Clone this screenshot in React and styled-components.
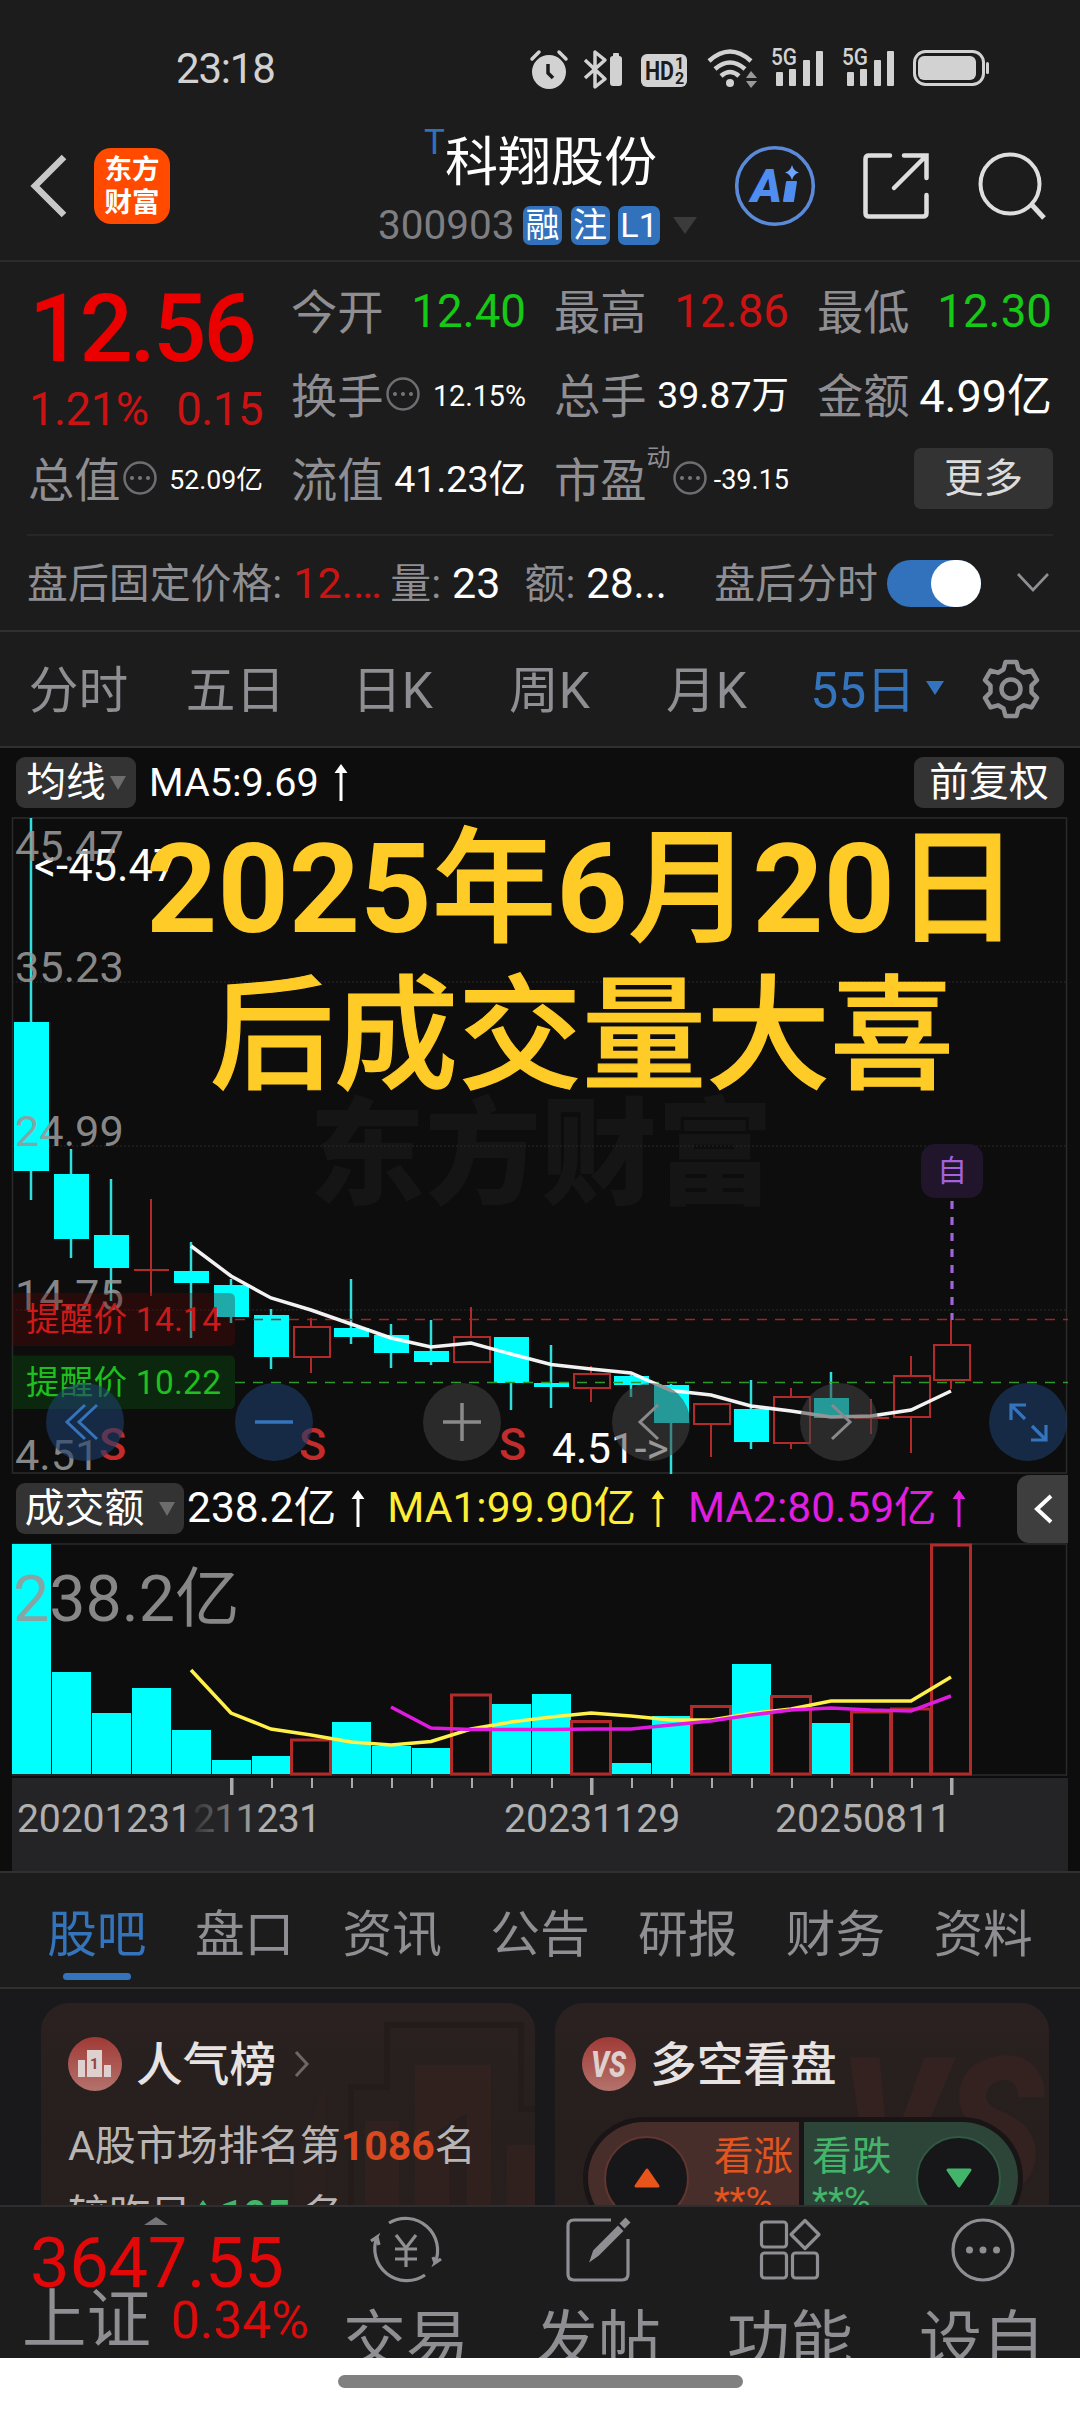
import React, { useState } from 'react'
import styled, { createGlobalStyle } from 'styled-components';

const GlobalStyle = createGlobalStyle`
  body {
    margin: 0;
    background: #1c1c1c;
    font-family: Roboto, "Noto Sans CJK SC", sans-serif;
  }
  * {
    box-sizing: border-box;
  }
  svg {
    overflow: visible;
  }
`;

const UP = '#cc1313';
const DOWN = '#17c917';
const CYAN = '#00ffff';
const RED_LINE = '#b22b2b';
const BLUE = '#3474bd';
const GRAY = '#8e8e93';

const Page = styled.div`
  width: 1080px;
  height: 2412px;
  display: flex;
  flex-direction: column;
  overflow: hidden;
  background: #1c1c1c;
  color: #fff;
  line-height: 1;
  white-space: nowrap;
`;

/* ---------- status bar ---------- */

const StatusBar = styled.div`
  height: 130px;
  display: flex;
  align-items: center;
  justify-content: space-between;
  padding: 8px 91px 0 176px;
  flex-shrink: 0;
`;

const Clock = styled.div`
  font-size: 42px;
  letter-spacing: -1.2px;
  color: #d2d2d2;
`;

/* ---------- header ---------- */

const Header = styled.header`
  height: 132px;
  display: flex;
  flex-shrink: 0;
  border-bottom: 2px solid #2c2c2e;
`;

const HeaderLeft = styled.div`
  width: 380px;
  height: 111px;
  display: flex;
  align-items: center;
  gap: 27px;
  padding-left: 30px;
`;

const Logo = styled.div`
  width: 76px;
  height: 76px;
  border-radius: 17px;
  background: #ff4a00;
  display: flex;
  flex-direction: column;
  align-items: center;
  justify-content: center;
  gap: 6px;
  font-size: 27.5px;
  font-weight: 700;
  padding-top: 1px;
`;

const HeaderCenter = styled.div`
  width: 355px;
`;

const StockName = styled.div`
  height: 66px;
  display: flex;
  align-items: center;
  padding-left: 44px;
  font-size: 53px;
`;

const TradeMark = styled.span`
  align-self: flex-start;
  margin-top: -5px;
  width: 21px;
  font-size: 35px;
  color: #2f72bb;
`;

const StockCode = styled.div`
  height: 50px;
  margin: 4px 0 0 -2px;
  display: flex;
  align-items: center;
  font-size: 40.5px;
  color: #7f7f83;
`;

const Badge = styled.span`
  width: ${({ $w }) => $w || 39}px;
  height: 39px;
  margin-left: 8.5px;
  border-radius: 7px;
  background: #3272bd;
  color: #fff;
  font-size: 34px;
  display: flex;
  align-items: center;
  justify-content: center;
`;

const Caret = styled.span`
  width: 0;
  height: 0;
  margin-left: ${({ $ml }) => $ml || 0}px;
  margin-bottom: ${({ $mb }) => $mb || 0}px;
  border-left: ${({ $s }) => $s}px solid transparent;
  border-right: ${({ $s }) => $s}px solid transparent;
  border-top: ${({ $h }) => $h}px solid ${({ $c }) => $c};
`;

const HeaderRight = styled.div`
  flex: 1;
  height: 111px;
  display: flex;
  align-items: center;
`;

/* ---------- quote ---------- */

const Quote = styled.section`
  height: 272px;
  flex-shrink: 0;
  padding: 8px 0 0 28px;
  display: grid;
  grid-template-columns: repeat(4, 235px);
  grid-template-rows: repeat(3, 84px);
  column-gap: 28px;
`;

const PriceBlock = styled.div`
  grid-row: span 2;
  color: #eb0000;
`;

const Price = styled.div`
  height: 114px;
  padding: 12px 0 0 1px;
  font-size: 94px;
  font-weight: 500;
  letter-spacing: -3px;
`;

const Change = styled.div`
  display: flex;
  justify-content: space-between;
  padding: 3px 0 0 1px;
  font-size: 45.5px;
  letter-spacing: -0.5px;
  color: ${UP};
`;

const Cell = styled.div`
  display: flex;
  align-items: center;
  font-size: 46.3px;
  color: ${GRAY};
`;

const Label = styled.span`
  padding-top: 3px;
`;

const Value = styled.span`
  margin-left: auto;
  font-size: ${({ $size }) => $size || 45.7}px;
  color: ${({ $color }) => $color || '#fff'};
`;

const Sup = styled.span`
  align-self: flex-start;
  margin: 8px 0 0 0;
  font-size: 24px;
`;

const MoreButton = styled.button`
  width: 139px;
  height: 61px;
  margin: 0 -1px 3px auto;
  border: 0;
  border-radius: 7px;
  background: #333;
  color: #dcdcdc;
  font: inherit;
  font-size: 39.5px;
`;

const AfterHours = styled.section`
  height: 96px;
  flex-shrink: 0;
  display: flex;
  align-items: center;
  margin: 0 27px;
  border-top: 2px solid #272727;
  font-size: 40.9px;
  color: ${GRAY};
`;

const Caption2 = styled.span`
  padding-top: 3px;
  margin-left: ${({ $ml }) => $ml || 0}px;
`;

const Num = styled.span`
  width: ${({ $w }) => $w}px;
  margin-left: 11px;
  padding-top: 1px;
  font-size: ${({ $size }) => $size || 43}px;
  color: ${({ $color }) => $color || '#fff'};
`;

const Toggle = styled.button`
  width: 95px;
  height: 47px;
  margin-left: 9px;
  padding: 0;
  border: 0;
  border-radius: 24px;
  background: ${({ $on }) => ($on ? '#3272bd' : '#555')};
  display: flex;
  justify-content: ${({ $on }) => ($on ? 'flex-end' : 'flex-start')};
`;

const Knob = styled.span`
  width: 50px;
  height: 47px;
  border-radius: 24px;
  background: #fff;
`;

/* ---------- tabs ---------- */

const PeriodTabs = styled.nav`
  height: 118px;
  flex-shrink: 0;
  display: grid;
  grid-template-columns: repeat(6, 157px) 1fr;
  border-top: 2px solid #303032;
  border-bottom: 2px solid #303032;
`;

const Period = styled.div`
  display: flex;
  align-items: center;
  justify-content: center;
  padding: 5px 0 0 ${({ $pl }) => $pl || 0}px;
  font-size: 49.7px;
  color: ${({ $active }) => ($active ? BLUE : GRAY)};
`;

const SectionTabs = styled.nav`
  height: 118px;
  flex-shrink: 0;
  display: grid;
  grid-template-columns: repeat(7, 1fr);
  padding: 0 23px;
  border-top: 2px solid #303032;
  border-bottom: 2px solid #303032;
`;

const SectionTab = styled.div`
  display: flex;
  flex-direction: column;
  align-items: center;
  padding-top: 38px;
  font-size: 49.7px;
  color: ${({ $active }) => ($active ? BLUE : GRAY)};

  &::after {
    content: '';
    width: 68px;
    height: 7px;
    margin-top: 12px;
    border-radius: 4px;
    background: ${({ $active }) => ($active ? BLUE : 'transparent')};
  }
`;

/* ---------- charts ---------- */

const ChartBar = styled.div`
  height: 69px;
  flex-shrink: 0;
  display: flex;
  align-items: center;
  background: #0d0d0d;
  font-size: ${({ $size }) => $size}px;
  padding: 0 ${({ $pr }) => $pr}px 0 16px;
`;

const ChipButton = styled.button`
  height: 51px;
  width: ${({ $w }) => $w}px;
  margin-top: -1px;
  border: 0;
  border-radius: 9px;
  background: #333;
  color: #fff;
  font: inherit;
  font-size: 39.8px;
  padding: 2px 0 0;
  display: flex;
  align-items: center;
  justify-content: center;

  &:nth-child(3) {
    margin-left: auto;
  }
`;

const Indicator = styled.span`
  display: flex;
  align-items: center;
  margin-left: ${({ $ml }) => $ml}px;
  color: ${({ $color }) => $color || '#fff'};
`;

const CollapseTab = styled.button`
  width: 51px;
  height: 68px;
  margin-left: auto;
  padding: 0;
  border: 0;
  border-radius: 12px 0 0 12px;
  background: #3e3e3e;
  display: flex;
  align-items: center;
  justify-content: center;
`;

const ChartBox = styled.div`
  position: relative;
  height: ${({ $h }) => $h}px;
  flex-shrink: 0;
  background: #0d0d0d;

  & > svg {
    display: block;
  }
`;

const Caption = styled.div`
  position: absolute;
  left: 146px;
  top: -1px;
  line-height: 147px;
  font-weight: 500;
  color: #ffcb26;
  -webkit-text-stroke: 1.2px #ffcb26;
`;

const CaptionLine = styled.div`
  padding-left: ${({ $indent }) => $indent || 0}px;
  font-size: ${({ $size }) => $size}px;

  b {
    font-weight: 700;
    -webkit-text-stroke: 0;
  }
`;

const RoundButton = styled.button`
  position: absolute;
  top: 566px;
  left: ${({ $cx }) => $cx - 39}px;
  width: 78px;
  height: 78px;
  padding: 0;
  border: 0;
  border-radius: 50%;
  background: ${({ $blue }) => ($blue ? 'rgba(30, 62, 106, 0.6)' : 'rgba(68, 68, 68, 0.55)')};
  color: ${({ $blue }) => ($blue ? '#3474bd' : '#8a8a8c')};
`;

/* ---------- cards ---------- */

const Cards = styled.section`
  height: 216px;
  flex-shrink: 0;
  overflow: hidden;
  display: flex;
  gap: 20px;
  padding: 14px 31px 0 41px;
  background: #19191b;
`;

const Card = styled.article`
  position: relative;
  flex: 1;
  height: 300px;
  border-radius: 28px;
  overflow: hidden;
  padding: 32px 27px;
  background: linear-gradient(180deg, #2a2120 0%, #261f1e 45%, #29211f 100%);
`;

const CardArt = styled.svg`
  position: absolute;
  right: 0;
  top: 0;
`;

const CardHead = styled.div`
  position: relative;
  display: flex;
  align-items: center;
  height: 58px;
  font-size: 46.7px;
  font-weight: 500;
  color: #e6e3e2;

  & > svg:first-child {
    margin-right: 14px;
  }
`;

const CardTitle = styled.span`
  padding-top: 3px;
`;

const RankLine = styled.p`
  position: relative;
  display: flex;
  align-items: center;
  margin: ${({ $mt }) => $mt}px 0 0;
  font-size: 41px;
  color: #b9b5b4;

  b {
    color: ${({ $color }) => $color};
    margin-right: ${({ $gap }) => $gap || 0}px;
  }
`;

const VoteBar = styled.div`
  position: relative;
  width: 440px;
  height: 122px;
  margin: 24px 0 0 1px;
  padding: 5px;
  border-radius: 61px;
  background: #191516;
  display: flex;
  gap: 5px;
`;

const VoteSide = styled.div`
  flex: 1;
  display: flex;
  flex-direction: ${({ $down }) => ($down ? 'row-reverse' : 'row')};
  justify-content: space-between;
  padding: ${({ $down }) => ($down ? '0 17px 0 8px' : '0 6px 0 16px')};
  align-items: center;
  background: ${({ $down }) => ($down ? '#2d4438' : '#482e2b')};
  border-radius: ${({ $down }) => ($down ? '0 56px 56px 0' : '56px 0 0 56px')};
  color: ${({ $down }) => ($down ? '#43b56a' : '#e2551f')};
`;

const VoteDot = styled.span`
  width: 85px;
  height: 85px;
  border-radius: 50%;
  border: 2px solid ${({ $down }) => ($down ? '#2f5a42' : '#613530')};
  background: #17171a;
  display: flex;
  align-items: center;
  justify-content: center;
`;

const VoteText = styled.div`
  font-size: 39.7px;
  line-height: 46px;

  small {
    display: block;
    font-size: 37px;
    line-height: 42px;
  }
`;

/* ---------- bottom bar ---------- */

const BottomBar = styled.footer`
  height: 153px;
  flex-shrink: 0;
  overflow: hidden;
  display: flex;
  border-top: 2px solid #2e2e30;
`;

const IndexBlock = styled.div`
  width: 310px;
  padding: 10px 0 0 22px;
`;

const UpMark = styled.div`
  width: 0;
  height: 0;
  margin-left: 122px;
  border-left: 12px solid transparent;
  border-right: 12px solid transparent;
  border-bottom: 8px solid #757579;
`;

const IndexValue = styled.div`
  height: 61px;
  padding: 3px 0 0 8px;
  font-size: 70.5px;
  letter-spacing: -0.4px;
  color: #e00808;
`;

const IndexName = styled.div`
  display: flex;
  align-items: center;
  padding-top: 2px;
  font-size: 64.5px;
  color: ${GRAY};
`;

const IndexChange = styled.span`
  margin-left: 20px;
  font-size: 51.5px;
  color: #dc0c0c;
`;

const Action = styled.div`
  width: 192px;
  display: flex;
  flex-direction: column;
  align-items: center;
  padding-top: 6px;
  gap: 22px;
  font-size: 63px;
  color: ${GRAY};

  & > svg {
    flex-shrink: 0;
  }
`;

const HomeArea = styled.div`
  height: 54px;
  flex-shrink: 0;
  background: #fff;
  display: flex;
  justify-content: center;
  padding-top: 17px;
`;

const HomePill = styled.div`
  width: 405px;
  height: 13px;
  border-radius: 7px;
  background: #808080;
`;

/* ---------- data ---------- */

// [high, bodyTop, bodyBottom, low, rising] as chart y values
const candles = [
  [818, 1022, 1171, 1200, 0],
  [1149, 1174, 1239, 1258, 0],
  [1179, 1235, 1268, 1301, 0],
  [1199, 1270, 1270, 1296, 1],
  [1242, 1271, 1283, 1338, 0],
  [1279, 1285, 1317, 1323, 0],
  [1309, 1315, 1357, 1369, 0],
  [1318, 1327, 1357, 1373, 1],
  [1279, 1328, 1337, 1344, 0],
  [1324, 1335, 1353, 1368, 0],
  [1320, 1351, 1362, 1365, 0],
  [1307, 1337, 1362, 1362, 1],
  [1337, 1337, 1383, 1410, 0],
  [1345, 1383, 1387, 1408, 0],
  [1366, 1374, 1388, 1402, 1],
  [1375, 1376, 1385, 1397, 0],
  [1384, 1385, 1423, 1474, 0],
  [1404, 1404, 1424, 1457, 1],
  [1380, 1409, 1442, 1449, 0],
  [1388, 1397, 1443, 1449, 1],
  [1372, 1398, 1418, 1418, 0],
  [1399, 1418, 1418, 1434, 1],
  [1356, 1376, 1417, 1453, 1],
  [1320, 1345, 1380, 1389, 1],
];

const ma5 = [1246, 1276, 1298, 1310, 1324, 1338, 1347, 1343, 1354, 1364.5, 1369, 1373, 1390.5, 1395, 1406, 1411, 1417, 1416, 1410, 1391];

const volumes = [1544, 1672, 1713, 1688, 1730, 1760, 1756, 1740, 1722, 1746, 1748, 1695, 1704, 1694, 1721.5, 1763, 1716, 1706.5, 1664, 1696.5, 1723, 1712, 1709, 1545];

const volMa1 = [1670, 1713, 1729, 1735, 1742, 1745, 1741.5, 1729, 1722, 1717, 1713, 1716, 1720, 1720, 1713.5, 1709, 1701, 1701, 1701, 1677];
const volMa2 = [1707, 1728, 1729.5, 1729.5, 1729.5, 1729, 1729, 1725, 1721, 1715, 1710, 1708, 1710, 1711, 1696];

const cx = (i) => 31 + i * 40;
const toLine = (values, start) => values.map((y, i) => `${cx(i + start)},${y}`).join(' ');

const axisLabels = [['45.47', 861], ['35.23', 982], ['24.99', 1146], ['14.75', 1310], ['4.51', 1470]];

const periods = ['分时', '五日', '日K', '周K', '月K'];
const sections = ['股吧', '盘口', '资讯', '公告', '研报', '财务', '资料'];

/* ---------- icons ---------- */

const SignalIcon = ({ x }) => (
  <g transform={`translate(${x} 0)`}>
    <text x="0" y="17" fontSize="23" fontWeight="500" textLength="26" lengthAdjust="spacingAndGlyphs">5G</text>
    <rect x="5" y="24" width="7" height="14" rx="1" />
    <rect x="18" y="21" width="7" height="17" rx="1" />
    <rect x="32" y="12" width="7" height="26" rx="1" />
    <rect x="45" y="3" width="7" height="35" rx="1" />
  </g>
);

const StatusIcons = () => (
  <svg width="459" height="42" viewBox="0 0 459 42" fill="#d2d2d2">
    {/* alarm */}
    <circle cx="19" cy="24" r="17" />
    <path d="M2 11 L9 4 M36 11 L29 4" stroke="#d2d2d2" strokeWidth="3.5" strokeLinecap="round" />
    <path d="M18 16 V25 L23 30" stroke="#1c1c1c" strokeWidth="3.5" fill="none" />
    {/* bluetooth with its battery */}
    <path d="M55 12 L75 31 L65 39 V4 L75 12 L55 30" fill="none" stroke="#d2d2d2" strokeWidth="3.5" strokeLinejoin="round" />
    <rect x="80" y="8" width="12" height="30" rx="3" />
    <rect x="83" y="5" width="6" height="4" rx="1" />
    {/* HD */}
    <rect x="111" y="6" width="46" height="33" rx="6" />
    <text x="115" y="32" fontSize="26" fontWeight="700" fill="#1c1c1c" textLength="29" lengthAdjust="spacingAndGlyphs">HD</text>
    <text x="145" y="21" fontSize="16" fontWeight="700" fill="#1c1c1c">1</text>
    <text x="145" y="36" fontSize="16" fontWeight="700" fill="#1c1c1c">2</text>
    {/* wifi */}
    <g fill="none" stroke="#d2d2d2" strokeWidth="4.5">
      <path d="M179 13 Q200 -6 221 13" />
      <path d="M185 21 Q200 8 215 21" />
      <path d="M191 28 Q200 20 209 28" />
    </g>
    <circle cx="200" cy="35" r="4" />
    <path d="M216 30 L221 23 L227 30 Z M216 33 L221 40 L227 33 Z" fill="#9a9a9a" />
    <SignalIcon x={241} />
    <SignalIcon x={312} />
    {/* battery */}
    <rect x="384.5" y="3.5" width="69" height="33" rx="11" fill="none" stroke="#d2d2d2" strokeWidth="3" />
    <rect x="388" y="8" width="58" height="24" rx="6" />
    <rect x="456" y="14" width="3" height="12" rx="1.5" />
  </svg>
);

const BackIcon = () => (
  <svg width="37" height="64" viewBox="0 0 37 64">
    <path d="M34 3 L5 32 L34 61" fill="none" stroke="#c8c8c8" strokeWidth="6.5" />
  </svg>
);

const AiIcon = () => (
  <svg width="80" height="82" viewBox="0 0 80 82">
    <circle cx="40" cy="41" r="38.3" fill="none" stroke="#5b8ad8" strokeWidth="3.6" />
    <text x="16" y="57" fontSize="47" fontWeight="900" fontStyle="italic" fill="#4f8df0" textLength="31" lengthAdjust="spacingAndGlyphs">A</text>
    <path d="M52 37 L61 37 L58 56 L49 56 Z" fill="#4f8df0" stroke="#4f8df0" strokeWidth="2" strokeLinejoin="round" />
    <path d="M57 20 Q58.500 26 64 27.500 Q58.500 29 57 35 Q55.500 29 50 27.500 Q55.500 26 57 20 Z" fill="#6ea4ff" />
  </svg>
);

const HeaderIcon = styled.svg`
  margin-left: 47px;
`;

const ShareIcon = () => (
  <HeaderIcon width="68" height="68" viewBox="0 0 68 68">
    <g fill="none" stroke="#dedede" strokeWidth="4.500" strokeLinecap="round">
      <path d="M28 3.500 H7 Q3.500 3.500 3.500 7 V61 Q3.500 64.500 7 64.500 H61 Q64.500 64.500 64.500 61 V43" />
      <path d="M42 3.500 H64.500 V26 M64 4 L32 36" />
    </g>
  </HeaderIcon>
);

const SearchIcon = () => (
  <HeaderIcon width="70" height="72" viewBox="0 0 70 72">
    <circle cx="33" cy="34" r="29.500" fill="none" stroke="#dedede" strokeWidth="4" />
    <path d="M55 55 L67 68" stroke="#dedede" strokeWidth="5" />
  </HeaderIcon>
);

const DotsSvg = styled.svg`
  margin: -5px 0 0 1px;
`;

const InfoDots = () => (
  <DotsSvg width="36" height="36" viewBox="0 0 36 36">
    <circle cx="18" cy="18" r="15.500" fill="none" stroke="#6e6e72" strokeWidth="2.500" />
    <circle cx="10" cy="18" r="2" fill="#77777b" />
    <circle cx="18" cy="18" r="2" fill="#77777b" />
    <circle cx="26" cy="18" r="2" fill="#77777b" />
  </DotsSvg>
);

const GearSvg = styled.svg`
  margin-top: -5px;
`;

const GearIcon = () => (
  <GearSvg width="58" height="60" viewBox="0 0 58 60">
    <g fill="none" stroke={GRAY} strokeWidth="4.500" strokeLinejoin="round">
      <path d="M23.500 3 H34.500 L36.500 10.500 L42 13.700 L49.500 11.600 L55 21.200 L49.500 26.700 V33.300 L55 38.800 L49.500 48.400 L42 46.300 L36.500 49.500 L34.500 57 H23.500 L21.500 49.500 L16 46.300 L8.500 48.400 L3 38.800 L8.500 33.300 V26.700 L3 21.200 L8.500 11.600 L16 13.700 L21.500 10.500 Z" />
      <circle cx="29" cy="30" r="9.500" />
    </g>
  </GearSvg>
);

const ArrowSvg = styled.svg`
  margin-left: 15px;
`;

const ArrowUp = () => (
  <ArrowSvg width="14" height="40" viewBox="0 0 14 40">
    <path d="M5.500 8 H8.500 V38 H5.500 Z M7 1 L13.500 10 H0.500 Z" fill="currentColor" />
  </ArrowSvg>
);

const RiseSvg = styled.svg`
  margin: 0 10px 0 5px;
`;

const ExpandSvg = styled.svg`
  margin: 0 3px 0 35px;
`;

const ChevronSvg = styled.svg`
  margin-left: 18px;
`;

/* ---------- charts ---------- */

const CandleChart = () => (
  <svg width="1080" height="657" viewBox="0 817 1080 657">
    <text x="309" y="1195" fontSize="116" fontWeight="900" fill="#151515">东方财富</text>
    <g stroke="#2b2b2b" fill="none">
      <rect x="12.500" y="818" width="1054" height="655" strokeWidth="1.500" />
      {[982, 1146, 1310].map((y) => (
        <line key={y} x1="12" x2="1067" y1={y} y2={y} strokeDasharray="2 2" />
      ))}
    </g>

    {candles.map(([high, top, bottom, low, rising], i) => {
      const x = cx(i);
      if (top === bottom) {
        return (
          <g key={i} stroke={RED_LINE} strokeWidth="2">
            <line x1={x} x2={x} y1={high} y2={low} />
            <line x1={x - 17} x2={x + 18} y1={top} y2={top} />
          </g>
        );
      }
      if (rising) {
        return (
          <g key={i} stroke={RED_LINE} strokeWidth="2" fill="none">
            <line x1={x} x2={x} y1={high} y2={top} />
            <line x1={x} x2={x} y1={bottom} y2={low} />
            <rect x={x - 17} y={top} width="36" height={bottom - top} />
          </g>
        );
      }
      return (
        <g key={i}>
          <line x1={x} x2={x} y1={high} y2={low} stroke="#30dede" strokeWidth="2.500" />
          <rect x={x - 17} y={top} width="35" height={bottom - top} fill={CYAN} />
        </g>
      );
    })}

    <line x1="235" x2="1068" y1="1319.500" y2="1319.500" stroke="#a02424" strokeWidth="1.300" strokeDasharray="10 8" />
    <line x1="235" x2="1068" y1="1382.500" y2="1382.500" stroke="#2a9a2a" strokeWidth="1.300" strokeDasharray="10 8" />
    <polyline points={toLine(ma5, 4)} fill="none" stroke="#fff" strokeWidth="3.500" strokeOpacity="0.95" />

    <g fill="#fff">
      <text x="34" y="881" fontSize="43.500">&lt;-45.47</text>
      <text x="552" y="1463" fontSize="42.500">4.51-&gt;</text>
    </g>
    <g fontSize="43.300" fill="#999" fillOpacity="0.88">
      {axisLabels.map(([label, y]) => <text key={label} x="15" y={y}>{label}</text>)}
    </g>

    <path d="M12 1293 H229 Q235 1293 235 1299 V1340 Q235 1346 229 1346 H12 Z" fill="#5a0a0a" fillOpacity="0.35" />
    <path d="M12 1355.500 H229 Q235 1355.500 235 1361 V1403 Q235 1409 229 1409 H12 Z" fill="#0a3a0f" fillOpacity="0.6" />
    <g fontSize="33.500">
      <text x="26" y="1331" fill="#cc1a1a" textLength="195">提醒价 14.14</text>
      <text x="26" y="1394" fill="#1fbf1f" textLength="195">提醒价 10.22</text>
    </g>

    <g fontSize="45" fontWeight="500" fill="#c12c2c">
      {[99, 299, 499].map((x) => <text key={x} x={x} y="1459.500">S</text>)}
    </g>

    <rect x="921" y="1144" width="62" height="54" rx="14" fill="#20152a" />
    <text x="937" y="1181" fontSize="30" fill="#a463dc">自</text>
    <line x1="952" x2="952" y1="1201" y2="1320" stroke="#a066d8" strokeWidth="3.200" strokeDasharray="8 8" />
  </svg>
);

const VolumeChart = () => (
  <svg width="1080" height="328" viewBox="0 1543 1080 328">
    <defs>
      <linearGradient id="dateFade" gradientUnits="userSpaceOnUse" x1="190" y1="0" x2="262" y2="0">
        <stop offset="0" stopColor="#2c2c2e" />
        <stop offset="1" stopColor="#b0b0b0" />
      </linearGradient>
    </defs>
    <rect x="12.500" y="1544" width="1054" height="231" fill="none" stroke="#2b2b2b" strokeWidth="1.500" />
    {volumes.map((y, i) => (candles[i][4] && i !== 3 ? (
      <rect key={i} x={cx(i) - 19.500} y={y} width="39" height={1774 - y} fill="none" stroke={RED_LINE} strokeWidth="3" />
    ) : (
      <rect key={i} x={cx(i) - 19} y={y} width="39" height={1774 - y} fill={CYAN} />
    )))}
    <polyline points={toLine(volMa1, 4)} fill="none" stroke="#fff04a" strokeWidth="3.500" />
    <polyline points={toLine(volMa2, 9)} fill="none" stroke="#e01be0" strokeWidth="3.500" />
    <text x="13" y="1621" fontSize="64.500" fill="#999" fillOpacity="0.88">238.2亿</text>

    <rect x="12" y="1778" width="1056" height="93" fill="#242426" />
    {candles.map((_, i) => {
      if (i < 5) return null;
      const major = i % 9 === 5;
      return <rect key={i} x={cx(i) + (major ? -1 : 0)} y="1778" width={major ? 3.5 : 2} height={major ? 17 : 10} fill="#aaa" />;
    })}
    <g fontSize="39.200" fill="#b0b0b0">
      <text x="17" y="1832" textLength="175">20201231</text>
      <text x="193" y="1832" fill="url(#dateFade)" textLength="128">211231</text>
      <text x="504" y="1832">20231129</text>
      <text x="775" y="1832">20250811</text>
    </g>
  </svg>
);

const App = () => {
  const [afterHours, setAfterHours] = useState(true);

  return (
    <Page>
      <GlobalStyle />
      <StatusBar>
        <Clock>23:18</Clock>
        <StatusIcons />
      </StatusBar>

      <Header>
        <HeaderLeft>
          <BackIcon />
          <Logo>
            <span>东方</span>
            <span>财富</span>
          </Logo>
        </HeaderLeft>
        <HeaderCenter>
          <StockName><TradeMark>T</TradeMark>科翔股份</StockName>
          <StockCode>
            300903
            <Badge>融</Badge>
            <Badge>注</Badge>
            <Badge $w={42}>L1</Badge>
            <Caret $ml={13} $s={12.5} $h={17} $c="#3b3b3b" />
          </StockCode>
        </HeaderCenter>
        <HeaderRight>
          <AiIcon />
          <ShareIcon />
          <SearchIcon />
        </HeaderRight>
      </Header>

      <Quote>
        <PriceBlock>
          <Price>12.56</Price>
          <Change><span>1.21%</span><span>0.15</span></Change>
        </PriceBlock>
        <Cell><Label>今开</Label><Value $color={DOWN}>12.40</Value></Cell>
        <Cell><Label>最高</Label><Value $color={UP}>12.86</Value></Cell>
        <Cell><Label>最低</Label><Value $color={DOWN}>12.30</Value></Cell>
        <Cell><Label>换手</Label><InfoDots /><Value $size={28.7}>12.15%</Value></Cell>
        <Cell><Label>总手</Label><Value $size={37.5}>39.87万</Value></Cell>
        <Cell><Label>金额</Label><Value $size={45}>4.99亿</Value></Cell>
        <Cell><Label>总值</Label><InfoDots /><Value $size={26.7}>52.09亿</Value></Cell>
        <Cell><Label>流值</Label><Value $size={37.5}>41.23亿</Value></Cell>
        <Cell><Label>市盈</Label><Sup>动</Sup><InfoDots /><Value $size={27}>-39.15</Value></Cell>
        <Cell><MoreButton>更多</MoreButton></Cell>
      </Quote>

      <AfterHours>
        <Caption2>盘后固定价格:</Caption2>
        <Num $w={84} $color={UP}>12.…</Num>
        <Caption2 $ml={13}>量:</Caption2>
        <Num $w={50}>23</Num>
        <Caption2 $ml={23}>额:</Caption2>
        <Num $w={78} $size={42}>28...</Num>
        <Caption2 $ml={50}>盘后分时</Caption2>
        <Toggle $on={afterHours} onClick={() => setAfterHours(!afterHours)}><Knob /></Toggle>
        <ExpandSvg width="34" height="22" viewBox="0 0 34 22">
          <path d="M2 2 L17 18 L32 2" fill="none" stroke={GRAY} strokeWidth="2.600" />
        </ExpandSvg>
      </AfterHours>

      <PeriodTabs>
        {periods.map((item) => <Period key={item}>{item}</Period>)}
        <Period $active $pl={27}>
          55日<Caret $ml={10} $mb={7} $s={9} $h={14} $c={BLUE} />
        </Period>
        <Period><GearIcon /></Period>
      </PeriodTabs>

      <ChartBar $size={39.6} $pr={16}>
        <ChipButton $w={120}>均线<Caret $ml={4} $s={8.5} $h={14} $c="#6c6c6c" /></ChipButton>
        <Indicator $ml={13}>MA5:9.69<ArrowUp /></Indicator>
        <ChipButton $w={150}>前复权</ChipButton>
      </ChartBar>

      <ChartBox $h={657}>
        <CandleChart />
        <Caption>
          <CaptionLine $size={124.5}><b>2025</b>年<b>6</b>月<b>20</b>日</CaptionLine>
          <CaptionLine $size={124} $indent={64}>后成交量大喜</CaptionLine>
        </Caption>
        <RoundButton $cx={85} $blue>
          <svg width="78" height="78" viewBox="0 0 78 78" fill="none" stroke="currentColor" strokeWidth="3">
            <path d="M39 22 L21 39 L39 56 M51 22 L33 39 L51 56" />
          </svg>
        </RoundButton>
        <RoundButton $cx={274} $blue>
          <svg width="78" height="78" viewBox="0 0 78 78" stroke="currentColor" strokeWidth="3.500">
            <path d="M20 39 H58" />
          </svg>
        </RoundButton>
        <RoundButton $cx={462}>
          <svg width="78" height="78" viewBox="0 0 78 78" stroke="currentColor" strokeWidth="3.500">
            <path d="M20 39 H58 M39 20 V58" />
          </svg>
        </RoundButton>
        <RoundButton $cx={651}>
          <svg width="78" height="78" viewBox="0 0 78 78" fill="none" stroke="currentColor" strokeWidth="3">
            <path d="M46 22 L28 39 L46 56" />
          </svg>
        </RoundButton>
        <RoundButton $cx={839}>
          <svg width="78" height="78" viewBox="0 0 78 78" fill="none" stroke="currentColor" strokeWidth="3">
            <path d="M32 22 L50 39 L32 56" />
          </svg>
        </RoundButton>
        <RoundButton $cx={1028} $blue>
          <svg width="78" height="78" viewBox="0 0 78 78" fill="none" stroke="currentColor" strokeWidth="3.200">
            <path d="M22 37 V22 H37 M22 22 L36 36 M57 42 V57 H42 M57 57 L43 43" />
          </svg>
        </RoundButton>
      </ChartBox>

      <ChartBar $size={42.5} $pr={12}>
        <ChipButton $w={168}>成交额<Caret $ml={15} $s={8.5} $h={14} $c="#6c6c6c" /></ChipButton>
        <Indicator $ml={3}>238.2亿<ArrowUp /></Indicator>
        <Indicator $ml={22} $color="#fdee35">MA1:99.90亿<ArrowUp /></Indicator>
        <Indicator $ml={23} $color="#e01ee0">MA2:80.59亿<ArrowUp /></Indicator>
        <CollapseTab>
          <svg width="22" height="32" viewBox="0 0 22 32">
            <path d="M19 3 L5 16 L19 29" fill="none" stroke="#fff" strokeWidth="4" />
          </svg>
        </CollapseTab>
      </ChartBar>

      <ChartBox $h={328}>
        <VolumeChart />
      </ChartBox>

      <SectionTabs>
        {sections.map((item, i) => <SectionTab key={item} $active={i === 0}>{item}</SectionTab>)}
      </SectionTabs>

      <Cards>
        <Card>
          <CardArt width="240" height="220" viewBox="0 0 240 220" fill="#33221f" fillOpacity="0.8">
            <path d="M0 160 L30 80 V220 H0 Z" fillOpacity="0.35" />
            <path d="M70 118 H104 V220 H70 Z M120 62 H196 V220 H120 Z M212 142 H240 V220 H212 Z" />
            <path d="M56 220 V84 H92 V22 H226 V106 H240" fill="none" stroke="#231c1b" strokeWidth="6" />
            <path d="M140 130 L172 110 V220 H154 V134 Z" fill="#261e1d" />
          </CardArt>
          <CardHead>
            <svg width="54" height="54" viewBox="0 0 54 54">
              <defs>
                <linearGradient id="coin" x1="0" y1="0" x2="0" y2="1">
                  <stop offset="0" stopColor="#a03a36" />
                  <stop offset="1" stopColor="#b4726c" />
                </linearGradient>
              </defs>
              <circle cx="27" cy="27" r="27" fill="url(#coin)" />
              <path d="M10 23 H17 V40 H10 Z M19 13 H34 V40 H19 Z M36 28 H43 V40 H36 Z" fill="#ddd0ce" />
              <text x="22" y="32" fontSize="15" fontWeight="700" fill="#8d4440">1</text>
            </svg>
            <CardTitle>人气榜</CardTitle>
            <ChevronSvg width="16" height="28" viewBox="0 0 16 28">
              <path d="M2 2 L13 14 L2 26" fill="none" stroke="#6d6666" strokeWidth="3" />
            </ChevronSvg>
          </CardHead>
          <RankLine $mt={33} $color="#d9481e">A股市场排名第<b>1086</b>名</RankLine>
          <RankLine $mt={28} $color="#43b56a" $gap={12}>
            较昨日
            <RiseSvg width="14" height="32" viewBox="0 0 14 32">
              <path d="M5 8 H9 V31 H5 Z M7 0 L14 10 H0 Z" fill="#43b56a" />
            </RiseSvg>
            <b>195</b>名
          </RankLine>
        </Card>
        <Card>
          <CardArt width="240" height="220" viewBox="0 0 240 220">
            <text x="30" y="190" fontSize="190" fontWeight="900" fontStyle="italic" fill="#33221f" textLength="205" lengthAdjust="spacingAndGlyphs">VS</text>
          </CardArt>
          <CardHead>
            <svg width="54" height="54" viewBox="0 0 54 54">
              <circle cx="27" cy="27" r="27" fill="url(#coin)" />
              <text x="9" y="40" fontSize="36" fontWeight="800" fontStyle="italic" fill="#ddd0ce" textLength="35" lengthAdjust="spacingAndGlyphs">VS</text>
            </svg>
            <CardTitle>多空看盘</CardTitle>
          </CardHead>
          <VoteBar>
            <VoteSide>
              <VoteDot>
                <svg width="28" height="22" viewBox="0 0 28 22">
                  <path d="M14 3 L25 19 H3 Z" fill="#e8551a" stroke="#e8551a" strokeWidth="3" strokeLinejoin="round" />
                </svg>
              </VoteDot>
              <VoteText>看涨<small>**%</small></VoteText>
            </VoteSide>
            <VoteSide $down>
              <VoteDot $down>
                <svg width="28" height="22" viewBox="0 0 28 22">
                  <path d="M14 19 L25 3 H3 Z" fill="#43b56a" stroke="#43b56a" strokeWidth="3" strokeLinejoin="round" />
                </svg>
              </VoteDot>
              <VoteText>看跌<small>**%</small></VoteText>
            </VoteSide>
          </VoteBar>
        </Card>
      </Cards>

      <BottomBar>
        <IndexBlock>
          <UpMark />
          <IndexValue>3647.55</IndexValue>
          <IndexName>上证<IndexChange>0.34%</IndexChange></IndexName>
        </IndexBlock>
        <Action>
          <svg width="74" height="74" viewBox="0 0 74 74" fill="none" stroke={GRAY} strokeWidth="3.200">
            <path d="M20 10 A32 32 0 0 1 66 50 L72 46 M66 50 L64 44" />
            <path d="M56 62 A32 32 0 0 1 8 24 L2 28 M8 24 L10 32" />
            <path d="M27 22 L37 35 L47 22 M37 35 V54 M26 36 H48 M26 46 H48" />
          </svg>
          交易
        </Action>
        <Action>
          <svg width="74" height="74" viewBox="0 0 74 74" fill="none" stroke={GRAY} strokeWidth="3.200">
            <path d="M50 7 H13 Q7 7 7 13 V61 Q7 67 13 67 H61 Q67 67 67 61 V26" />
            <path d="M30 47 L33 38 L57 14 L61 18 L37 42 Z" fill={GRAY} strokeWidth="2" />
            <path d="M61 13 L67 7" strokeWidth="7" />
          </svg>
          发帖
        </Action>
        <Action>
          <svg width="74" height="74" viewBox="0 0 74 74" fill="none" stroke={GRAY} strokeWidth="3.200">
            <rect x="8.500" y="9" width="25" height="25" rx="3" />
            <rect x="8.500" y="40" width="25" height="25" rx="3" />
            <rect x="39.500" y="40" width="25" height="25" rx="3" />
            <path d="M52 7.500 L66 21.500 L52 35.500 L38 21.500 Z" strokeLinejoin="round" />
          </svg>
          功能
        </Action>
        <Action>
          <svg width="74" height="74" viewBox="0 0 74 74" fill={GRAY}>
            <circle cx="38" cy="37" r="30" fill="none" stroke={GRAY} strokeWidth="3.200" />
            <circle cx="24.500" cy="37" r="3.500" />
            <circle cx="38" cy="37" r="3.500" />
            <circle cx="51.500" cy="37" r="3.500" />
          </svg>
          设自
        </Action>
      </BottomBar>

      <HomeArea>
        <HomePill />
      </HomeArea>
    </Page>
  )
}

export default App;
